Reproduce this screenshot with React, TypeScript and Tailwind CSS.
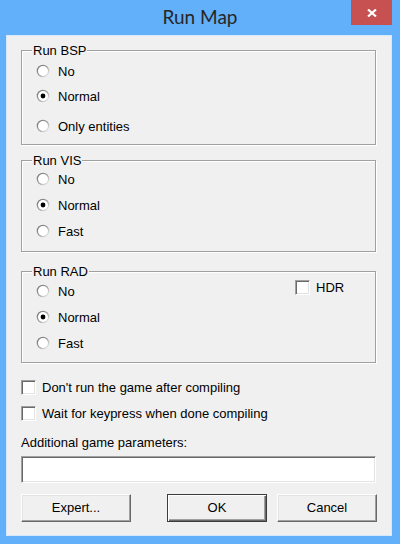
const font = { fontFamily: '"Liberation Sans", Arial, sans-serif' };

function Radio({ checked }: { checked?: boolean }) {
  return (
    <svg width="14" height="14" viewBox="0 0 14 14" className="shrink-0">
      <defs>
        <linearGradient id="rg" x1="0" y1="0" x2="1" y2="1">
          <stop offset="0" stopColor="#6e6e6e" />
          <stop offset="0.5" stopColor="#a0a0a0" />
          <stop offset="1" stopColor="#ffffff" />
        </linearGradient>
      </defs>
      <circle cx="7" cy="7" r="6.3" fill="url(#rg)" />
      <circle cx="7" cy="7" r="5" fill="#ffffff" />
      {checked && <circle cx="7" cy="7" r="2.4" fill="#000000" />}
    </svg>
  );
}

function Check() {
  return (
    <span className="block w-[15px] h-[15px] shrink-0 bg-white border border-t-[#a0a0a0] border-l-[#a0a0a0] border-r-white border-b-white shadow-[inset_1px_1px_0_#696969,inset_-1px_-1px_0_#e3e3e3]" />
  );
}

function RadioRow({ label, checked, cls }: { label: string; checked?: boolean; cls?: string }) {
  return (
    <div className={`flex h-[20px] items-center gap-[8px] ${cls ?? ''}`}>
      <Radio checked={checked} />
      <span className="text-[13px] leading-[15px] text-black">{label}</span>
    </div>
  );
}

function Group({ title, height, children, cls }: { title: string; height: string; children: React.ReactNode; cls: string }) {
  return (
    <div className={`relative w-[355px] border border-[#a0a0a0] shadow-[1px_1px_0_#ffffff,inset_1px_1px_0_#ffffff] ${height} ${cls}`}>
      <span className="absolute -top-[8px] left-[10px] px-[1px] bg-[#f0f0f0] text-[13px] leading-[15px] text-black">
        {title}
      </span>
      {children}
    </div>
  );
}

function Button({ label, def, w }: { label: string; def?: boolean; w: string }) {
  return (
    <div
      className={`${w} h-[28px] flex items-center justify-center bg-[#f0f0f0] text-[13px] text-black ${
        def
          ? 'border border-[#3c3c3c] shadow-[inset_1px_1px_0_#ffffff,inset_-1px_-1px_0_#696969,inset_-2px_-2px_0_#a0a0a0]'
          : 'border border-t-white border-l-white border-r-[#696969] border-b-[#696969] shadow-[inset_-1px_-1px_0_#a0a0a0,inset_1px_1px_0_#e3e3e3]'
      }`}
    >
      {label}
    </div>
  );
}

export default function App() {
  return (
    <div className="relative w-[400px] h-[544px] bg-[#62b0fa] overflow-hidden" style={font}>
      {/* title bar */}
      <div className="h-[35px] flex items-center justify-center">
        <span className="text-[19px] leading-[22px] text-[#262626] -mt-[2px]" style={{ fontFamily: 'Lato, "Noto Sans", sans-serif' }}>
          Run Map
        </span>
      </div>
      <div className="absolute top-0 right-[8px] w-[41px] h-[25px] bg-[#c75050] flex items-center justify-center">
        <svg width="10" height="8" viewBox="0 0 10 8">
          <path d="M1 0.5 L9 7.5 M9 0.5 L1 7.5" stroke="#ffffff" strokeWidth="2.2" />
        </svg>
      </div>

      {/* client area */}
      <div className="ml-[6px] w-[386px] h-[501px] bg-[#f0f0f0] border border-[#d6e8fa] pl-[14px] pr-[14px] flex flex-col">
        <Group title="Run BSP" height="h-[95px]" cls="mt-[14px] pt-[10px] pl-[14px]">
          <RadioRow label="No" />
          <RadioRow label="Normal" checked cls="mt-[5px]" />
          <RadioRow label="Only entities" cls="mt-[10px]" />
        </Group>

        <Group title="Run VIS" height="h-[92px]" cls="mt-[15px] pt-[8px] pl-[14px]">
          <RadioRow label="No" />
          <RadioRow label="Normal" checked cls="mt-[6px]" />
          <RadioRow label="Fast" cls="mt-[6px]" />
        </Group>

        <Group title="Run RAD" height="h-[92px]" cls="mt-[19px] pt-[9px] pl-[14px] flex">
          <div className="flex-1">
            <RadioRow label="No" />
            <RadioRow label="Normal" checked cls="mt-[6px]" />
            <RadioRow label="Fast" cls="mt-[6px]" />
          </div>
          <div className="w-[80px] h-[15px] -mt-[1px] flex items-center gap-[6px]">
            <Check />
            <span className="text-[13px] leading-[15px] text-black">HDR</span>
          </div>
        </Group>

        <div className="mt-[17px] h-[15px] flex items-center gap-[6px]">
          <Check />
          <span className="text-[13px] leading-[15px] text-black">Don't run the game after compiling</span>
        </div>
        <div className="mt-[11px] h-[15px] flex items-center gap-[6px]">
          <Check />
          <span className="text-[13px] leading-[15px] text-black">Wait for keypress when done compiling</span>
        </div>

        <div className="mt-[13px] h-[16px] flex items-center text-[13px] leading-[15px] text-black">
          Additional game parameters:
        </div>
        <div className="mt-[6px] w-[355px] h-[27px] bg-white border border-t-[#a0a0a0] border-l-[#a0a0a0] border-r-white border-b-white shadow-[inset_1px_1px_0_#696969,inset_-1px_-1px_0_#e3e3e3]" />

        <div className="mt-[11px] flex">
          <Button label="Expert..." w="w-[110px]" />
          <div className="ml-auto flex gap-[10px]">
            <Button label="OK" def w="w-[100px]" />
            <Button label="Cancel" w="w-[100px]" />
          </div>
        </div>
      </div>
    </div>
  );
}
